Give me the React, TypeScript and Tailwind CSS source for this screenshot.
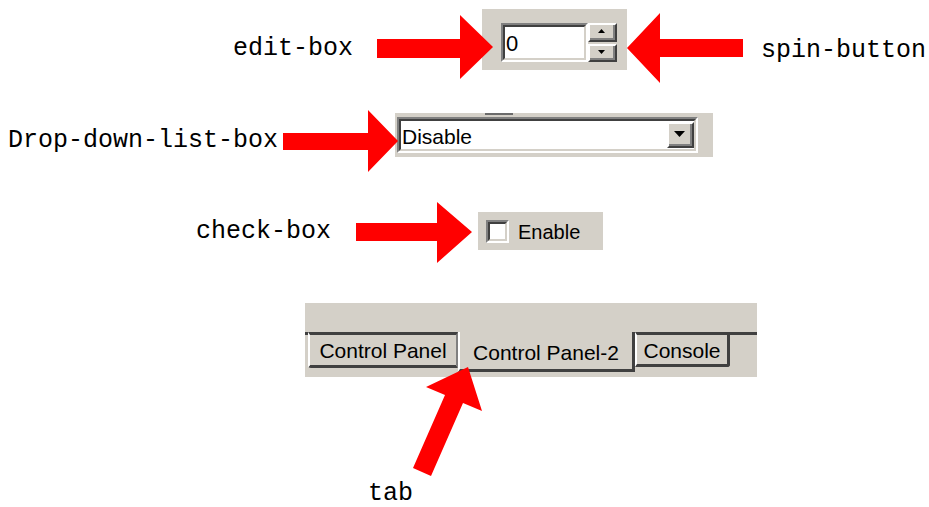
import React from "react";

// Annotated sketch of classic Windows controls: each widget sits on a free
// canvas with a red arrow pointing at it and a mono label next to the arrow.

const mono = "font-['Liberation_Mono','DejaVu_Sans_Mono',monospace] text-[25px] leading-none text-black";
const ui = "font-['Liberation_Sans',Arial,sans-serif] text-black";

// Sunken 3D frame (edit fields, combo, checkbox)
function Sunken({ className, children }: { className: string; children?: React.ReactNode }) {
  return (
    <div className={`flex border-2 border-t-[#808080] border-l-[#808080] border-b-white border-r-white ${className}`}>
      <div className="flex flex-1 border-2 border-t-[#404040] border-l-[#404040] border-b-[#d4d0c8] border-r-[#d4d0c8] bg-white">
        {children}
      </div>
    </div>
  );
}

// Raised 3D button face
function Raised({ className, children }: { className: string; children?: React.ReactNode }) {
  return (
    <div className={`flex border-2 border-t-white border-l-white border-b-[#404040] border-r-[#404040] bg-[#d4d0c8] ${className}`}>
      <div className="flex flex-1 items-center justify-center border-b-2 border-r-2 border-[#808080]">{children}</div>
    </div>
  );
}

function Tri({ up, w, h }: { up?: boolean; w: number; h: number }) {
  return (
    <svg width={w} height={h} viewBox={`0 0 ${w} ${h}`}>
      <polygon points={up ? `0,${h} ${w},${h} ${w / 2},0` : `0,0 ${w},0 ${w / 2},${h}`} fill="#000" />
    </svg>
  );
}

const ARROWS = [
  // edit-box →
  "377,39 460,39 460,15 493,47 460,79 460,58 377,58",
  // ← spin-button
  "743,39 660,39 660,13 627,48 660,83 660,57 743,57",
  // drop-down-list-box →
  "283,133 368,133 368,110 398,141 368,172 368,150 283,150",
  // check-box →
  "356,223 437,223 437,202 472,232 437,263 437,241 356,241",
  // tab ↗
  "413,468 445,395 426,387 468,367 482,411 463,403 431,476",
];

export default function App() {
  return (
    <div className="relative h-[507px] w-[929px] overflow-hidden bg-white">
      {/* labels */}
      <span className={`absolute left-[233px] top-[36px] ${mono}`}>edit-box</span>
      <span className={`absolute left-[761px] top-[38px] ${mono}`}>spin-button</span>
      <span className={`absolute left-[8px] top-[128px] ${mono}`}>Drop-down-list-box</span>
      <span className={`absolute left-[196px] top-[219px] ${mono}`}>check-box</span>
      <span className={`absolute left-[368px] top-[481px] ${mono}`}>tab</span>

      {/* edit box + spin button */}
      <div className="absolute left-[482px] top-[9px] flex h-[61px] w-[145px] items-start bg-[#d4d0c8] pl-[19px] pt-[14px]">
        <Sunken className="h-[39px] w-[87px]">
          <span className={`pl-[1px] text-[22px] leading-[33px] ${ui}`}>0</span>
        </Sunken>
        <div className="flex h-[39px] w-[29px] flex-col gap-[2px]">
          <Raised className="flex-1">
            <Tri up w={7} h={4} />
          </Raised>
          <Raised className="flex-1">
            <Tri w={7} h={4} />
          </Raised>
        </div>
      </div>

      {/* drop-down list box */}
      <div className="absolute left-[395px] top-[113px] h-[44px] w-[318px] bg-[#d4d0c8] pl-[2px] pt-[4px]">
        <div className="absolute left-[90px] top-0 h-[2px] w-[28px] bg-[#6b6b6b]" />
        <Sunken className="h-[36px] w-[301px]">
          <span className={`flex-1 pl-[1px] pt-[1px] text-[21px] leading-[30px] ${ui}`}>Disable</span>
          <Raised className="my-[1px] w-[27px]">
            <Tri w={11} h={6} />
          </Raised>
        </Sunken>
      </div>

      {/* check box */}
      <div className="absolute left-[478px] top-[212px] flex h-[38px] w-[125px] items-center gap-[9px] bg-[#d4d0c8] pl-[8px]">
        <Sunken className="h-[23px] w-[23px]" />
        <span className={`pt-[2px] text-[20px] leading-none ${ui}`}>Enable</span>
      </div>

      {/* tab strip */}
      <div className={`absolute left-[305px] top-[303px] flex h-[74px] w-[452px] items-start bg-[#d4d0c8] pt-[29px] text-[21px] ${ui}`}>
        <div className="w-[3px] border-t-[3px] border-[#404040]" />
        <div className="flex h-[36px] w-[150px] items-center justify-center rounded-bl-[3px] border-t-[3px] border-r-2 border-b-[3px] border-l-2 border-t-[#404040] border-r-[#808080] border-b-[#404040] border-l-white pt-[2px]">
          Control Panel
        </div>
        <div className="flex h-[40px] w-[177px] items-center justify-center border-r-[3px] border-b-[3px] border-l-2 border-r-[#404040] border-b-[#404040] border-l-white pt-[5px]">
          Control Panel-2
        </div>
        <div className="flex h-[35px] w-[95px] items-center justify-center rounded-br-[3px] border-t-[3px] border-r-[3px] border-b-[3px] border-l-2 border-t-[#404040] border-r-[#404040] border-b-[#404040] border-l-white pt-[2px]">
          Console
        </div>
        <div className="flex-1 border-t-[3px] border-[#404040]" />
      </div>

      {/* arrows */}
      <svg className="pointer-events-none absolute inset-0" width={929} height={507} viewBox="0 0 929 507">
        {ARROWS.map((pts) => (
          <polygon key={pts} points={pts} fill="#ff0000" />
        ))}
      </svg>
    </div>
  );
}
